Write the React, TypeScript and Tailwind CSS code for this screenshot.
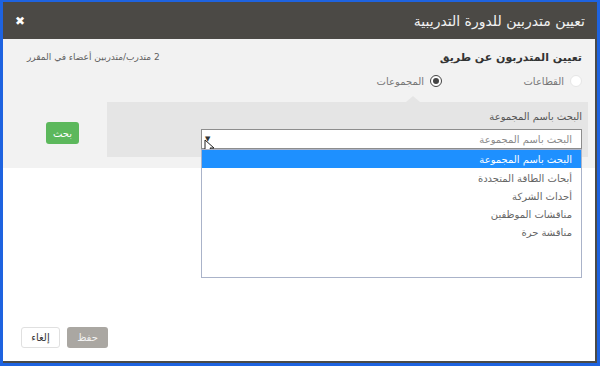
import React from "react";

const options = ["أبحاث الطاقة المتجددة", "أحداث الشركة", "مناقشات الموظفين", "مناقشة حرة"];

export default function App() {
  return (
    <div className="w-[600px] h-[366px] bg-[#1e63e0] pt-[2px] pl-[3px] pr-[3px] pb-[3px] font-['DejaVu_Sans',sans-serif]">
      <div className="h-full flex flex-col bg-white border-r-2 border-b-2 border-[#4a4a48]">
        {/* Header */}
        <div className="h-[37px] shrink-0 bg-[#4b4945] flex items-center justify-between pl-[12px] pr-[10px]">
          <span className="text-white text-[12px] font-bold leading-none">✖</span>
          <span dir="rtl" className="text-[#f2f2f2] text-[14px] leading-none">
            تعيين متدربين للدورة التدريبية
          </span>
        </div>

        {/* Top grey section */}
        <div className="bg-[#f2f2f2] pt-[11px] pb-[11px] shrink-0">
          <div className="h-[16px] flex items-center justify-between pl-[24px] pr-[13px]">
            <span dir="rtl" className="text-[9px] text-[#5f5f5f]">
              2 متدرب/متدربين أعضاء في المقرر
            </span>
            <span dir="rtl" className="text-[11px] font-bold text-[#333]">
              تعيين المتدربون عن طريق
            </span>
          </div>

          <div dir="rtl" className="mt-[7px] h-[16px] flex items-center pr-[13px]">
            <label className="w-[140px] flex items-center gap-[6px]">
              <span className="w-[12px] h-[12px] rounded-full bg-white border border-[#e6e6e6]" />
              <span className="text-[10px] text-[#777]">القطاعات</span>
            </label>
            <label className="flex items-center gap-[6px]">
              <span className="w-[12px] h-[12px] rounded-full border-[1.5px] border-[#444] bg-white flex items-center justify-center">
                <span className="w-[6px] h-[6px] rounded-full bg-[#444]" />
              </span>
              <span className="text-[10px] text-[#777]">المجموعات</span>
            </label>
          </div>

          <div className="mt-[13px] flex items-start pr-[7px]">
            <div className="w-[104px] shrink-0 pl-[43px] pt-[20px]">
              <button className="w-[33px] h-[22px] rounded-[3px] bg-[#5cb85c] text-white text-[10px] flex items-center justify-center">
                بحث
              </button>
            </div>
            <div className="relative flex-1 h-[55px] bg-[#e5e5e5] pt-[7px] pr-[6px] flex flex-col items-end">
              <span className="absolute left-[299px] -top-[6px] w-0 h-0 border-l-[7px] border-r-[7px] border-b-[6px] border-l-transparent border-r-transparent border-b-[#e5e5e5]" />
              <span dir="rtl" className="h-[15px] text-[10px] text-[#555] leading-[15px]">
                البحث باسم المجموعة
              </span>
              <div className="relative mt-[5px] w-[381px] h-[20px] bg-white border border-[#8d8d8d] flex items-center justify-between pl-[3px] pr-[9px]">
                <span className="text-[7px] text-[#333] leading-none">▼</span>
                <span dir="rtl" className="text-[10px] text-[#8a8a8a]">
                  البحث باسم المجموعة
                </span>
                {/* cursor */}
                <svg className="absolute left-[2px] top-[9px]" width="11" height="16" viewBox="0 0 11 16">
                  <path d="M1 1 L1 13 L4 10 L6.5 15 L8.5 14 L6 9 L10 9 Z" fill="#fff" stroke="#222" strokeWidth="1" strokeLinejoin="round" />
                </svg>
                {/* open list */}
                <div className="absolute left-[-1px] top-[19px] w-[381px] h-[129px] bg-white border border-[#aab3c9] z-10">
                  <div dir="rtl" className="h-[18px] bg-[#1e90ff] text-white text-[10px] flex items-center pr-[9px]">
                    البحث باسم المجموعة
                  </div>
                  <div className="mt-[1px]">
                    {options.map((o) => (
                      <div key={o} dir="rtl" className="h-[18px] text-[10px] text-[#666] flex items-center pr-[9px]">
                        {o}
                      </div>
                    ))}
                  </div>
                </div>
              </div>
            </div>
          </div>
        </div>

        {/* Footer */}
        <div className="flex-1 flex items-end pl-[18px] pb-[13px]">
          <div className="flex gap-[7px]">
            <button className="w-[39px] h-[21px] bg-white border border-[#e0e0e0] rounded-[3px] text-[10px] text-[#333] flex items-center justify-center">
              إلغاء
            </button>
            <button className="w-[41px] h-[21px] bg-[#aaa7a2] rounded-[3px] text-[10px] text-[#f3f3f3] flex items-center justify-center">
              حفظ
            </button>
          </div>
        </div>
      </div>
    </div>
  );
}
